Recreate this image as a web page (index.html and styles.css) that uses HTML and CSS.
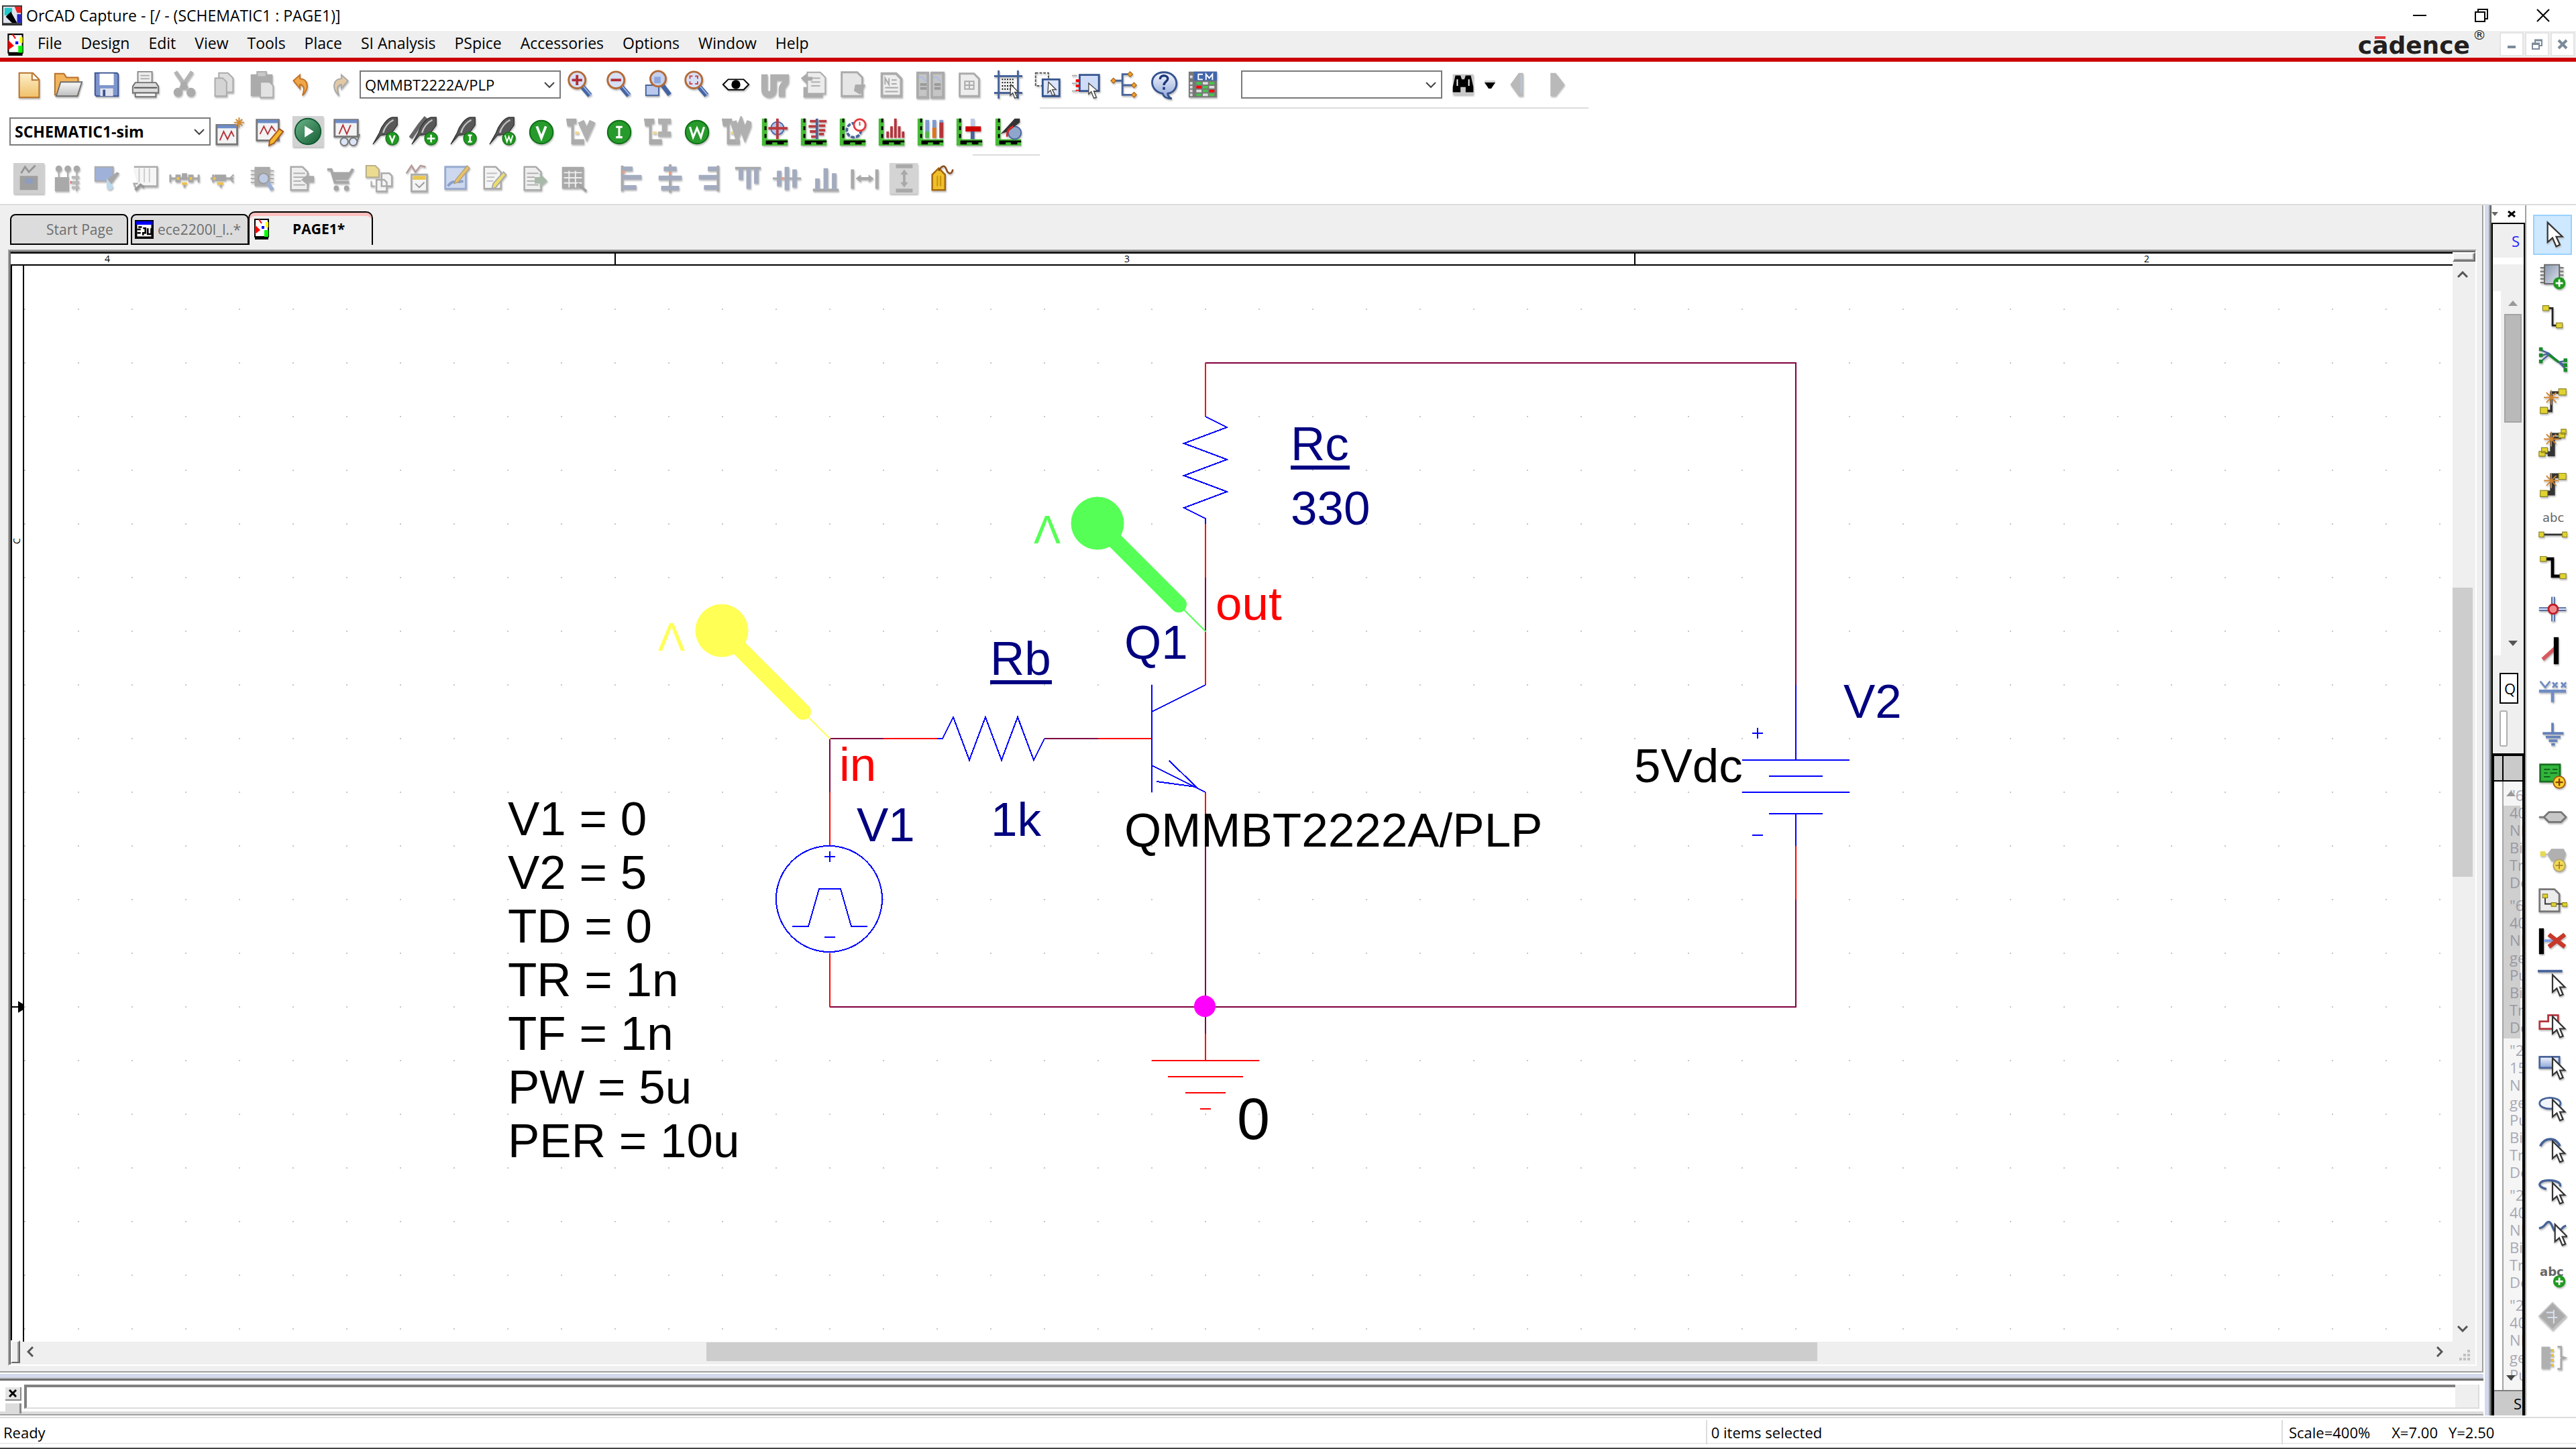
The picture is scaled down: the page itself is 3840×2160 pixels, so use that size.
FILE: index.html
```html
<!DOCTYPE html>
<html lang="en">
<head>
<meta charset="utf-8">
<title>OrCAD Capture - [/ - (SCHEMATIC1 : PAGE1)]</title>
<link rel="stylesheet" href="styles.css">
</head>
<body>
<svg class="sprite" aria-hidden="true">
  <defs>
    <linearGradient id="g-blue" x2="0" y2="1"><stop offset="0" stop-color="#f4f7ff"/><stop offset="1" stop-color="#8ba3d6"/></linearGradient>
    <linearGradient id="g-chip" x2="1" y2="1"><stop offset="0" stop-color="#8795ad"/><stop offset="1" stop-color="#dfe4ee"/></linearGradient>
    <linearGradient id="g-gray" x2="0" y2="1"><stop offset="0" stop-color="#fafafa"/><stop offset="1" stop-color="#bdbdbd"/></linearGradient>
    <linearGradient id="g-tan" x2="0" y2="1"><stop offset="0" stop-color="#fdf0cc"/><stop offset="1" stop-color="#f0c069"/></linearGradient>
    <linearGradient id="g-run" x2="1" y2="1"><stop offset="0" stop-color="#6fb58a"/><stop offset="1" stop-color="#125c33"/></linearGradient>
  </defs>
  <symbol id="i-new" viewBox="0 0 24 24"><path d="M4.500 3h10.500l5 5v14h-15.500z" fill="url(#g-tan)" stroke="#b5702a"/><path d="M14.500 3.500v5h5" fill="#fff" stroke="#b5702a"/></symbol>
  <symbol id="i-open" viewBox="0 0 24 24"><path d="M2 20V3.500h7l2 3h9V20z" fill="#f2b45c" stroke="#b5702a"/><path d="M3 21l3.500-11H23l-3.500 11z" fill="url(#g-gray)" stroke="#6e6e6e"/></symbol>
  <symbol id="i-save" viewBox="0 0 24 24"><path d="M3 3h17l1 1v17H4l-1-1z" fill="#7d95cc" stroke="#3b5490"/><path d="M6.500 3.500h11v9h-11z" fill="#fff"/><path d="M7 15h10v6H7z" fill="#dfe3ee"/><path d="M9 16h2v5H9z" fill="#3b5490"/></symbol>
  <symbol id="i-print" viewBox="0 0 24 24"><path d="M6 2h11v9H6z" fill="#eee" stroke="#8a8a8a"/><path d="M8 5h7M8 7.500h7" stroke="#aaa"/><path d="M4 10.500h16l2 3v5H2v-5z" fill="#dcdcdc" stroke="#707070"/><path d="M3 14.500h18" stroke="#555"/><path d="M4 18.500h16v3H4z" fill="#f4f4f4" stroke="#707070"/></symbol>
  <symbol id="i-cut" viewBox="0 0 24 24"><path d="M5 2l9 13M18 2L9 15" stroke="#b4b4b4" stroke-width="3"/><circle cx="7" cy="18" r="3.500" fill="#ababab"/><circle cx="17" cy="18" r="3.500" fill="#ababab"/><path d="M9 10h5v6H9z" fill="#ababab"/></symbol>
  <symbol id="i-copy" viewBox="0 0 24 24"><path d="M8.500 3h7l4 4v11h-11z" fill="#ddd" stroke="#ababab"/><path d="M5.500 7h6l3 3v11h-9z" fill="#d4d4d4" stroke="#ababab"/></symbol>
  <symbol id="i-paste" viewBox="0 0 24 24"><path d="M3 4h17v17H3z" fill="#ababab"/><path d="M8 2h7v4H8z" fill="#c8c8c8" stroke="#ababab"/><path d="M10.500 10h7l3 3v9h-10z" fill="#e2e2e2" stroke="#ababab"/></symbol>
  <symbol id="i-undo" viewBox="0 0 24 24"><path d="M6 9l5-4.500v3c6 0 8 7 2 13 2-6 1-8-2-8.500V15z" fill="#f0a548" stroke="#c27225"/></symbol>
  <symbol id="i-redo" viewBox="0 0 24 24"><path d="M18 9l-5-4.500v3c-6 0-8 7-2 13-2-6-1-8 2-8.500V15z" fill="#e4c9a5" stroke="#a9a9a9"/></symbol>
  <symbol id="i-lens" viewBox="0 0 24 24"><path d="M13.500 13.500l6 7" stroke="#4464a4" stroke-width="4"/><path d="M14.500 13.500l6 7" stroke="#9db4e3"/><circle cx="9.500" cy="8.500" r="6.500" fill="#d7e0f7" stroke="#b46a35" stroke-width="1.500"/></symbol>
  <symbol id="i-zoomin" viewBox="0 0 24 24"><use href="#i-lens"/><path d="M9.500 4.500v8M5.500 8.500h8" stroke="#b22e34" stroke-width="2"/></symbol>
  <symbol id="i-zoomout" viewBox="0 0 24 24"><use href="#i-lens"/><path d="M5.500 8.500h8" stroke="#b22e34" stroke-width="2"/></symbol>
  <symbol id="i-zoomarea" viewBox="0 0 24 24"><path d="M2.500 12.500h10v8h-10z" fill="#b8c8ee" stroke="#47649a"/><path d="M15 12l6 8" stroke="#4464a4" stroke-width="3.500"/><circle cx="12" cy="7.500" r="6" fill="#c3d0f0" stroke="#b46a35" stroke-width="1.500"/><path d="M9 6h5v5H9z" fill="#8ea6dc"/></symbol>
  <symbol id="i-zoomfit" viewBox="0 0 24 24"><use href="#i-lens"/><path d="M6.500 7.500v-2h2M10.500 5.500h2v2M12.500 9.500v2h-2M8.500 11.500h-2v-2" fill="none" stroke="#c4474b"/></symbol>
  <symbol id="i-eye" viewBox="0 0 24 24"><path d="M2 12l4-4h12l4 4-4 4H6z" fill="#fff" stroke="#000"/><circle cx="12" cy="12" r="3.500"/></symbol>
  <symbol id="i-annot" viewBox="0 0 24 24"><path d="M4 4v12c0 5 7 5 7 0V4M13 6.500h7.500v3c0 2-3 3-3 6v6" fill="none" stroke="#b0b0b0" stroke-width="5"/></symbol>
  <symbol id="i-back" viewBox="0 0 24 24"><path d="M7 2.500h10l4 4V19H7z" fill="#ececec" stroke="#ababab"/><path d="M10 7h7M10 10h7M10 13h7" stroke="#b0b0b0"/><path d="M2 7l5-4v3h4v3H7v3zM4 14h3v5h12v3H4z" fill="#ababab"/></symbol>
  <symbol id="i-drc" viewBox="0 0 24 24"><path d="M3.500 2.500h12l4 4V21h-16z" fill="#e6e6e6" stroke="#ababab" stroke-width="1.500"/><path d="M14 12h8l-4 8-5-3z" fill="#ababab"/></symbol>
  <symbol id="i-net" viewBox="0 0 24 24"><path d="M4.500 3.500h11l4 4V21h-15z" fill="#ededed" stroke="#ababab" stroke-width="2"/><path d="M7 12V7l3 5V7M12 8.500h4M12 11.500h4M7 14.500h10M7 17.500h10" fill="none" stroke="#aaa"/></symbol>
  <symbol id="i-cross" viewBox="0 0 24 24"><path d="M2 3h8v19H2zM13 3h9v19h-9z" fill="#c5c5c5" stroke="#ababab" stroke-width="2"/><path d="M3 7c4-3 4 3 6 2M14 7c4-3 4 3 6 2" fill="none" stroke="#a8bbe6"/><path d="M4 12h5M4 15h5M15 12h5M15 15h5" stroke="#9a9a9a" stroke-width="2"/></symbol>
  <symbol id="i-bom" viewBox="0 0 24 24"><path d="M4.500 3.500h11l4 4V21h-15z" fill="#ededed" stroke="#ababab" stroke-width="1.500"/><path d="M8 9.500h8M8 12.500h8M8 15.500h8M8.500 9v7M12 9v7M15.500 9v7" stroke="#aaa"/></symbol>
  <symbol id="i-grid" viewBox="0 0 24 24"><path d="M1 5.500h22M1 18.500h22M4.500 1v22M19.500 1v22" stroke="#47649a" stroke-width="1.500"/><path d="M7 8h10M7 10.500h10M7 13h10M7 15.500h10" stroke="#000" stroke-dasharray="1 1"/><path d="M14 12l6 6h-3l2 4-2 .5-1.500-4-2 2z" fill="#fff" stroke="#444" stroke-width=".7"/></symbol>
  <symbol id="i-drag" viewBox="0 0 24 24"><path d="M3 3h10v10H3z" fill="none" stroke="#555" stroke-dasharray="2 1"/><path d="M8.500 8h13v13h-13z" fill="#dce5fa" stroke="#35538f" stroke-width="1.500"/><path d="M13 10l6 6h-3l2 4-2 .5-1.500-4-2 2z" fill="#fff" stroke="#444" stroke-width=".7"/></symbol>
  <symbol id="i-itemsel" viewBox="0 0 24 24"><path d="M7 4.500h15V17H7z" fill="#cfdcf7" stroke="#35538f" stroke-width="1.500"/><path d="M1 5h4M1 11h4M1 17h4" stroke="#aaa"/><path d="M4 8h3v2H4zM4 12h3v2H4zM4 16h3v1H4z" fill="#e00"/><path d="M14 11l7 6h-3l2 5-2 .5-2-5-2 2z" fill="#fff" stroke="#444" stroke-width=".7"/></symbol>
  <symbol id="i-tree" viewBox="0 0 24 24"><path d="M3 9h7M10 9V4h6M10 9v11h9M10 12.500h9" fill="none" stroke="#47649a" stroke-width="1.500"/><path d="M3 7l2 2-2 2-2-2zM16 2l2 2-2 2-2-2zM19 10.500l2 2-2 2-2-2zM19 18l2 2-2 2-2-2z" fill="#f2a12e" stroke="#a85f10" stroke-width=".6"/></symbol>
  <symbol id="i-help" viewBox="0 0 24 24"><path d="M12 2.500c12 0 13 15 3 16.500 0 2 1 3 3 4-4 0-6-1-7-4C0 17 0 2.500 12 2.500z" fill="url(#g-blue)" stroke="#35538f" stroke-width="1.500"/><path d="M9 8c0-4 6-3.500 6-.5 0 2-3 2.500-3 5M12 14v2" fill="none" stroke="#1d3878" stroke-width="1.800"/></symbol>
  <symbol id="i-cm" viewBox="0 0 24 24"><path d="M1 2h22v20H1z" fill="#777"/><path d="M5 2h18v7H5z" fill="#4166ac"/><path d="M12 4H8.500v4H12M14.500 8.500V4l2.500 3 2.500-3v4.500" fill="none" stroke="#fff"/><path d="M7 10h4v2H7zM17 10h4v2h-4zM12 13h4v2h-4zM12 16h4v2h-4zM7 19h4v2H7zM17 19h4v2h-4z" fill="#45c34a"/><path d="M7 13h4v2H7zM17 16h4v2h-4z" fill="#f00"/><path d="M12 10h4v2h-4zM17 13h4v2h-4zM7 16h4v2H7zM12 19h4v2h-4zM2 5h2v2H2zM2 10h2v2H2zM2 13h2v2H2zM2 16h2v2H2zM2 19h2v2H2z" fill="#ddd"/></symbol>
  <symbol id="i-find" viewBox="0 0 24 24"><path d="M4 4h16v16H4z" fill="#c9c9c9"/><path d="M6 5h4l1 3h2l1-3h4l2 9v4h-6v-4h-4v4H4v-4z"/><path d="M7.500 8v5M16.500 8v5" stroke="#fff"/></symbol>
  <symbol id="i-left" viewBox="0 0 24 24"><path d="M17 3v18h-3.500L7 12l6.500-9z" fill="#b9b9b9"/><path d="M15.500 4.500v14" stroke="#b8c6e8"/></symbol>
  <symbol id="i-right" viewBox="0 0 24 24"><path d="M8 3v18h4l7-9-7-9z" fill="#b9b9b9"/></symbol>

  <symbol id="i-simnew" viewBox="0 0 24 24"><path d="M1.500 7h16v15h-16z" fill="#f3f3f3" stroke="#777" stroke-width="1.500"/><path d="M2 7h15v2.500H2z" fill="#6d8cc8"/><path d="M4 19l3-7 3 6 3-6 2 4" fill="none" stroke="#b5343b"/><path d="M19 1v8M15 5h8M16.500 2.500l5 5M21.500 2.500l-5 5" stroke="#d18a33"/></symbol>
  <symbol id="i-simedit" viewBox="0 0 24 24"><path d="M2.500 3h17v16h-17z" fill="#f3f3f3" stroke="#777" stroke-width="1.500"/><path d="M3 3h16v2.500H3z" fill="#6d8cc8"/><path d="M5 14l3-6 3 6 3-6 3 4" fill="none" stroke="#b5343b"/><path d="M20 10l3 2-7 9-4 2 .5-4z" fill="#f5b730" stroke="#a6561a"/></symbol>
  <symbol id="i-run" viewBox="0 0 24 24"><path d="M0 0h24v24H0z" fill="#d2d2d2"/><circle cx="12" cy="12" r="10" fill="url(#g-run)" stroke="#0d5a30"/><path d="M9.500 7.500l7 4.500-7 4.500z" fill="#fff"/></symbol>
  <symbol id="i-simview" viewBox="0 0 24 24"><path d="M2.500 3h18v13h-18z" fill="#f3f3f3" stroke="#777" stroke-width="1.500"/><path d="M3 3h17v2.500H3z" fill="#6d8cc8"/><path d="M6 14l3-7 3 7 3-7" fill="none" stroke="#b5343b"/><circle cx="10" cy="20" r="3" fill="#dbe4f8" stroke="#777"/><circle cx="17" cy="20" r="3" fill="#dbe4f8" stroke="#777"/><path d="M20 20l2-6" stroke="#777"/></symbol>
  <symbol id="i-probe" viewBox="0 0 24 24"><path d="M2 22l5-9c2-6 6-11 10-12h4v6l-5 7-8 1z" fill="#585858" stroke="#2c2c2c" stroke-width=".6"/><path d="M18 3c-4 2-7 6-8 10" fill="none" stroke="#c4c4c4" stroke-width="1.300"/><circle cx="17" cy="17.500" r="5" fill="#1f9a1f" stroke="#0f6b12" stroke-width=".6"/></symbol>
  <symbol id="i-pv" viewBox="0 0 24 24"><use href="#i-probe"/><path d="M15 15l2 5 2-5" fill="none" stroke="#fff" stroke-width="1.300"/></symbol>
  <symbol id="i-pd" viewBox="0 0 24 24"><path d="M1 17L8 7l5-6" stroke="#666" stroke-width="3"/><use href="#i-probe"/><path d="M17 14.500v6M14 17.500h6" stroke="#fff" stroke-width="1.300"/></symbol>
  <symbol id="i-pi" viewBox="0 0 24 24"><use href="#i-probe"/><path d="M17 14.500v6M15.500 15h3M15.500 20h3" stroke="#fff" stroke-width="1.300"/></symbol>
  <symbol id="i-pw" viewBox="0 0 24 24"><use href="#i-probe"/><path d="M14 15l1.500 5 1.500-4 1.500 4 1.500-5" fill="none" stroke="#fff"/></symbol>
  <symbol id="i-disc" viewBox="0 0 24 24"><circle cx="12" cy="12.500" r="9" fill="#279a2c" stroke="#0c7014"/></symbol>
  <symbol id="i-bv" viewBox="0 0 24 24"><use href="#i-disc"/><path d="M8.500 8l3.500 9 3.500-9" fill="none" stroke="#fff" stroke-width="2"/></symbol>
  <symbol id="i-bi" viewBox="0 0 24 24"><use href="#i-disc"/><path d="M12 8v9M9.500 8.500h5M9.500 16.500h5" fill="none" stroke="#fff" stroke-width="1.600"/></symbol>
  <symbol id="i-bw" viewBox="0 0 24 24"><use href="#i-disc"/><path d="M6.500 8.500l2.500 8 3-7 3 7 2.500-8" fill="none" stroke="#fff" stroke-width="1.600"/></symbol>
  <symbol id="i-tag" viewBox="0 0 24 24"><path d="M1 2h8v4H7v12h8v4H5V8H2z" fill="#ababab"/><path d="M8 12h3v2H8z" fill="#f1d890"/></symbol>
  <symbol id="i-tv" viewBox="0 0 24 24"><use href="#i-tag"/><path d="M12.500 4l4.500 10 4.500-10" fill="none" stroke="#b0b0b0" stroke-width="5"/></symbol>
  <symbol id="i-ti" viewBox="0 0 24 24"><use href="#i-tag"/><path d="M12 4h10M12 14h10M17 4v10" stroke="#b0b0b0" stroke-width="4"/></symbol>
  <symbol id="i-tw" viewBox="0 0 24 24"><use href="#i-tag"/><path d="M10 4l3 10 3-8 3 8 4-10" fill="none" stroke="#b0b0b0" stroke-width="5"/></symbol>
  <symbol id="i-axis" viewBox="0 0 24 24"><path d="M2 2h4v16h16v5H2z" fill="#46bb35"/><path d="M4 2h1.500v3H4zM4 8h1.500v3H4zM4 14h1.500v3H4zM5 19h17v1.500H5zM5 22h5v-1.500H5zM14 22h5v-1.500h-5z"/></symbol>
  <symbol id="i-a1" viewBox="0 0 24 24"><use href="#i-axis"/><circle cx="14" cy="9.500" r="5" fill="#b5c4e4" stroke="#4a69a8"/><path d="M14 2v16M7 9.500h15" stroke="#b93a3f" stroke-width="2"/></symbol>
  <symbol id="i-a2" viewBox="0 0 24 24"><use href="#i-axis"/><path d="M14.500 2v16" stroke="#47649a" stroke-width="2"/><path d="M9 4h5M8 8h6M9 12h5M10 16h4M16 4h6M16 7.500h5M16 11h5M16 14h4" stroke="#b93a3f" stroke-width="2"/></symbol>
  <symbol id="i-a3" viewBox="0 0 24 24"><use href="#i-axis"/><circle cx="13" cy="11" r="5.500" fill="#fff" stroke="#47649a" stroke-width="2" stroke-dasharray="3 1"/><circle cx="17.500" cy="7" r="4.500" fill="#fff" stroke="#e23a3f" stroke-width="1.500"/><path d="M17.500 4.500v3" stroke="#e23a3f"/></symbol>
  <symbol id="i-a4" viewBox="0 0 24 24"><use href="#i-axis"/><path d="M9 12v5M12 8v9M15 2v15M18 8v9M21 12v5" stroke="#b5343b" stroke-width="2"/></symbol>
  <symbol id="i-a5" viewBox="0 0 24 24"><use href="#i-axis"/><path d="M9.500 3v14M15 3v14M20.500 3v14" stroke="#7e9ad0" stroke-width="3"/><path d="M9.500 12v5" stroke="#50b846" stroke-width="3"/><path d="M15 9v8" stroke="#e0731d" stroke-width="3"/><path d="M20.500 5v12" stroke="#b5343b" stroke-width="3"/></symbol>
  <symbol id="i-a6" viewBox="0 0 24 24"><use href="#i-axis"/><path d="M14.500 2v6" stroke="#b8c6e8" stroke-width="3"/><path d="M14.500 12v6" stroke="#47649a" stroke-width="3"/><path d="M9 8h12v4H9z" fill="#c00"/></symbol>
  <symbol id="i-a7" viewBox="0 0 24 24"><use href="#i-axis"/><circle cx="17" cy="13" r="5" fill="#8ea6cc" stroke="#47649a"/><path d="M6 14L17 2h4v3L12 12z" fill="#333"/><path d="M11 16c0-5 2-7 5-8" fill="none" stroke="#d22" stroke-width="1.500"/></symbol>

  <symbol id="i-b1" viewBox="0 0 24 24"><path d="M0 0h24v24H0z" fill="#cfcfcf"/><path d="M5 10h14v11H5z" fill="#9f9f9f"/><path d="M6 8l3-5 3 4 5-5" fill="none" stroke="#969696" stroke-width="1.500"/><path d="M9 12h6v4H9z" fill="#8d9cc0"/></symbol>
  <symbol id="i-b2" viewBox="0 0 24 24"><circle cx="5" cy="4.500" r="2.500" fill="#a9a9a9"/><circle cx="12" cy="4.500" r="2.500" fill="#a9a9a9"/><circle cx="19" cy="4.500" r="2.500" fill="#a9a9a9"/><path d="M5 5v6M12 5v6M19 5v17" stroke="#a9a9a9"/><path d="M2 11h11v11H2z" fill="#a9a9a9"/><path d="M15 11h6M15 15h6M15 19h6" stroke="#b8b8b8" stroke-width="2"/><path d="M14 14h1v2h-1z" fill="#e66"/></symbol>
  <symbol id="i-b3" viewBox="0 0 24 24"><path d="M3 3h14v11H3z" fill="#9fb1d8" stroke="#ababab"/><path d="M12 13l8-6 2 1-7 9z" fill="#a7a7a7"/><path d="M12 12v7c1 3 5 2 5-1" fill="#bcd9ee"/></symbol>
  <symbol id="i-b4" viewBox="0 0 24 24"><path d="M3 3h18v15H8l-3 3-2-5h3" fill="#f6f6f6" stroke="#ababab" stroke-width="1.300"/><path d="M7 4v11M11 4v11M15 4v11" stroke="#ccc"/><path d="M4 21l4-4 3 2" fill="none" stroke="#999" stroke-width="2"/></symbol>
  <symbol id="i-b5" viewBox="0 0 24 24"><path d="M1 12h22M1 9v6M23 9v6M12 15v4" stroke="#a6a6a6" stroke-width="1.500"/><path d="M5 9h4v6H5zM10 8h4v5h-4zM15 9h4v6h-4z" fill="#a6a6a6"/><path d="M6 11h2v2H6zM16 11h2v2h-2zM10 15h4v2h-4z" fill="#edc251"/></symbol>
  <symbol id="i-b6" viewBox="0 0 24 24"><path d="M2 12h18M4 9v6M10 15v4" stroke="#a6a6a6" stroke-width="1.500"/><path d="M5 9h9v5H5z" fill="#a6a6a6"/><path d="M20 9l-3 3 3 3" fill="none" stroke="#a6a6a6"/><path d="M7 15h5v2H7zM4 11h2v2H4z" fill="#edc251"/></symbol>
  <symbol id="i-b7" viewBox="0 0 24 24"><path d="M6 3h12v15H6z" fill="#ababab"/><path d="M3 6h18M3 9h18M3 12h18M3 15h18" stroke="#ababab"/><circle cx="13" cy="12" r="4" fill="#bfcbe4" stroke="#999"/><path d="M16 15l4 6" stroke="#9db0d6" stroke-width="3"/></symbol>
  <symbol id="i-b8" viewBox="0 0 24 24"><path d="M4 3h9l4 4v14H4z" fill="#eee" stroke="#ababab" stroke-width="1.300"/><path d="M6 8h9M6 11h9M6 14h6M6 17h9" stroke="#aaa"/><path d="M22 10v5h-4v3l-6-5 6-5v2z" fill="#ababab"/></symbol>
  <symbol id="i-b9" viewBox="0 0 24 24"><path d="M2 5h3l3 10h11" fill="none" stroke="#a6a6a6" stroke-width="2"/><path d="M6 7h13l2-3 2 1-5 8H8z" fill="#a6a6a6"/><circle cx="9" cy="19.500" r="2" fill="#a6a6a6"/><circle cx="17" cy="19.500" r="2" fill="#a6a6a6"/></symbol>
  <symbol id="i-b10" viewBox="0 0 24 24"><path d="M2 2h7l3 3v6H2z" fill="#eadb90" stroke="#b5ad88"/><path d="M14 8h6l2 2v8h-8zM10 13h6l2 2v7h-8z" fill="#f4f4f4" stroke="#ababab" stroke-width="1.300"/><path d="M6 14v4h3" fill="none" stroke="#aaa"/></symbol>
  <symbol id="i-b11" viewBox="0 0 24 24"><path d="M3 8l4-6 3 5 4-5 4 1" fill="none" stroke="#b79a9a" stroke-width="1.300"/><path d="M7 9h12v13H7z" fill="#f4f4f4" stroke="#ababab" stroke-width="1.500"/><path d="M8 10h10v3H8z" fill="#e9c64e"/><path d="M10 16l3 3 4-4" fill="none" stroke="#999"/></symbol>
  <symbol id="i-b12" viewBox="0 0 24 24"><path d="M3 3h16v17H3z" fill="#cdd8ef" stroke="#98abd0" stroke-width="1.500"/><path d="M5 18c4-6 8-2 12-4" fill="none" stroke="#8b9fc9" stroke-width="2"/><path d="M20 2l2 2-9 11-3 1 1-3z" fill="#e6c169" stroke="#a99a7a" stroke-width=".6"/></symbol>
  <symbol id="i-b13" viewBox="0 0 24 24"><path d="M3 3h9l4 4v13H3z" fill="#f4f4f4" stroke="#aaa" stroke-width="1.300"/><path d="M5 8h8M5 11h6M5 14h5" stroke="#bbb"/><path d="M18 7l2 2-8 10-3 1 1-4z" fill="#eddf6a" stroke="#aaa"/></symbol>
  <symbol id="i-b14" viewBox="0 0 24 24"><path d="M4 3h9l4 4v14H4z" fill="#eee" stroke="#ababab" stroke-width="1.300"/><path d="M6 8h9M6 11h6M6 14h6M6 17h9" stroke="#aaa"/><path d="M12 11v5h4v3l6-5-6-6v3z" fill="#a9b9a9"/></symbol>
  <symbol id="i-b15" viewBox="0 0 24 24"><path d="M3 3h17v17H3z" fill="#a9a9a9"/><path d="M4.500 7.500h14M4.500 11.500h14M4.500 15.500h14M8.500 6v13M13.500 6v13" stroke="#eee"/><path d="M15 16l7 6" stroke="#a0a0a0" stroke-width="2"/></symbol>
  <symbol id="i-al" viewBox="0 0 24 24"><path d="M5 2v20" stroke="#a9a9a9" stroke-width="2"/><path d="M5 4.500h8M5 11h15M5 19h11" stroke="#a3abbf" stroke-width="3.500"/><path d="M5 6h2v2H5z" fill="#f0a080"/></symbol>
  <symbol id="i-ac" viewBox="0 0 24 24"><path d="M12 1v22" stroke="#a9a9a9" stroke-width="2"/><path d="M7 4.500h10M3 11.500h18M5 19.500h14" stroke="#a3abbf" stroke-width="3.500"/><path d="M11 7h2v2h-2z" fill="#f0a080"/></symbol>
  <symbol id="i-ar" viewBox="0 0 24 24"><path d="M19 2v20" stroke="#a9a9a9" stroke-width="2"/><path d="M11 4.500h8M4 11h15M8 19h11" stroke="#a3abbf" stroke-width="3.500"/></symbol>
  <symbol id="i-at" viewBox="0 0 24 24"><path d="M2 4h20" stroke="#a9a9a9" stroke-width="2"/><path d="M6.500 4v9M12.500 4v16M18.500 4v12" stroke="#a3abbf" stroke-width="3.500"/></symbol>
  <symbol id="i-am" viewBox="0 0 24 24"><path d="M1 12h22" stroke="#a9a9a9" stroke-width="1.500"/><path d="M6 6v12M12 3v18M18 5v14" stroke="#a3abbf" stroke-width="3.500"/><path d="M8 11h2v2H8z" fill="#f0a080"/></symbol>
  <symbol id="i-ab" viewBox="0 0 24 24"><path d="M2 21h20" stroke="#a9a9a9" stroke-width="2"/><path d="M5.500 12v9M12 4v17M18.500 8v13" stroke="#a3abbf" stroke-width="3.500"/></symbol>
  <symbol id="i-dh" viewBox="0 0 24 24"><path d="M2.500 5v15M21.500 5v15" stroke="#a9a9a9" stroke-width="2.500"/><path d="M5 12l4-3v2h6V9l4 3-4 3v-2H9v2z" fill="#a9a9a9"/></symbol>
  <symbol id="i-dv" viewBox="0 0 24 24"><path d="M1 0h22v24H1z" fill="#d4d4d4"/><path d="M6 1h13v3H6zM6 20h13v3H6z" fill="#a9a9a9"/><path d="M12.500 5l3 4h-2v6h2l-3 4-3-4h2V9h-2z" fill="#a9a9a9"/></symbol>
  <symbol id="i-label" viewBox="0 0 24 24"><path d="M4 9l5-5 5 5v12H4z" fill="#eec02a" stroke="#a5680e" stroke-width="1.300"/><path d="M8 10v8M10.500 10v8" stroke="#c8900a"/><path d="M9 6c3-5 5-4 6-1s4 5 5 0" fill="none" stroke="#8a4a16" stroke-width="1.300"/></symbol>

  <symbol id="i-ptr" viewBox="0 0 24 24"><path d="M8 2v16l4-3.500 3 7 3-1.500-3-6.500h5z" fill="#fff" stroke="#333" stroke-width="1.200"/></symbol>
  <symbol id="i-part" viewBox="0 0 24 24"><path d="M2 5h19M2 8h19M2 11h19M2 14h19M2 17h19" stroke="#777" stroke-width="1.300"/><path d="M5.500 2.500h12v15.500h-12z" fill="url(#g-chip)" stroke="#666"/><circle cx="17.500" cy="17.500" r="5" fill="#1f9a1f"/><path d="M17.500 14.500v6M14.500 17.500h6" stroke="#fff" stroke-width="1.500"/></symbol>
  <symbol id="i-wire" viewBox="0 0 24 24"><path d="M6 4h6v14h6" fill="none" stroke="#222" stroke-width="1.500"/><path d="M4 2h5v4H4zM15 16h5v4h-5z" fill="#e2d231" stroke="#8b8420" stroke-width=".6"/></symbol>
  <symbol id="i-netg" viewBox="0 0 24 24"><path d="M2 4l7 3 8 7 6 3M2 9l7-2M2 14l7-6M17 14l6 6M17 14l6-1" fill="none" stroke="#47649a" stroke-width="1.300"/><path d="M9 8l8 6" stroke="#188a2a" stroke-width="2"/><path d="M1 2h3v3H1zM1 7h3v3H1zM1 12h3v3H1zM21 11h3v3h-3zM21 15h3v3h-3zM21 19h3v3h-3z" fill="#188a2a"/></symbol>
  <symbol id="i-spark" viewBox="0 0 24 24"><path d="M11 3v12M5 9h12M7 5l8 8M15 5l-8 8" stroke="#d1842f"/></symbol>
  <symbol id="i-auto1" viewBox="0 0 24 24"><path d="M5 20h6V5h9" fill="none" stroke="#333" stroke-width="2"/><use href="#i-spark"/><path d="M17 2h6v5h-6zM2 17h6v5H2z" fill="#e2d231" stroke="#8b8420" stroke-width=".6"/></symbol>
  <symbol id="i-auto2" viewBox="0 0 24 24"><path d="M5 20h6V5h9M8 22h5V8h6" fill="none" stroke="#333" stroke-width="2"/><use href="#i-spark"/><path d="M17 4h5v4h-5zM19 1h4v4h-4zM1 19h5v4H1zM3 16h5v4H3z" fill="#e2d231" stroke="#8b8420" stroke-width=".6"/></symbol>
  <symbol id="i-auto3" viewBox="0 0 24 24"><path d="M5 19h7V5h8" fill="none" stroke="#333" stroke-width="4"/><use href="#i-spark"/><path d="M17 3h6v5h-6zM2 17h6v5H2z" fill="#e2d231" stroke="#8b8420" stroke-width=".6"/></symbol>
  <symbol id="i-line" viewBox="0 0 24 24"><path d="M3 19h19" stroke="#333" stroke-width="1.500"/><path d="M1 17h4v4H1zM20 17h4v4h-4z" fill="#e2d231" stroke="#8b8420" stroke-width=".6"/></symbol>
  <symbol id="i-bus" viewBox="0 0 24 24"><path d="M5 5h7v14h8" fill="none" stroke="#000" stroke-width="2.600"/><path d="M2 3h5v4H2zM18 17h5v4h-5z" fill="#e2d231" stroke="#8b8420" stroke-width=".6"/></symbol>
  <symbol id="i-junc" viewBox="0 0 24 24"><path d="M1 12h22M12.500 2v20" stroke="#47649a" stroke-width="3"/><path d="M1 12h22M12.500 2v20" stroke="#dfe8fb"/><circle cx="12.500" cy="12" r="3.800" fill="#f08a8e" stroke="#c01c24" stroke-width="1.500"/></symbol>
  <symbol id="i-entry" viewBox="0 0 24 24"><path d="M4 19L14 10" stroke="#d65a5f" stroke-width="3"/><path d="M13 1h4v22h-4z"/></symbol>
  <symbol id="i-pwr" viewBox="0 0 24 24"><path d="M2 3l4 5 4-5M12 4l4 4M16 4l-4 4M19 4l4 4M23 4l-4 4" fill="none" stroke="#6f8cc4" stroke-width="1.500"/><path d="M1 11h22M12 11v9" stroke="#6f8cc4" stroke-width="2.500"/></symbol>
  <symbol id="i-gnd" viewBox="0 0 24 24"><path d="M12 3v9M4 11.500h17M6.500 14.500h12M9 17.500h7M11 20.500h3" stroke="#6581ba" stroke-width="2"/></symbol>
  <symbol id="i-hier" viewBox="0 0 24 24"><path d="M2 3h16v14H2z" fill="#31b53c" stroke="#186f20" stroke-width="1.500"/><path d="M5 7h5M12 7h4M5 10h3M10 10h6M5 13h5" stroke="#0d5a15"/><circle cx="17.500" cy="17.500" r="4.800" fill="#f8d42e" stroke="#a5560e"/><path d="M17.500 14.500v6M14.500 17.500h6" stroke="#8a3d08" stroke-width="1.300"/></symbol>
  <symbol id="i-port" viewBox="0 0 24 24"><path d="M1 12h4l4-4h10l4 4-4 4H9l-4-4" fill="#c8c8c8" stroke="#777" stroke-width="1.500"/></symbol>
  <symbol id="i-pin" viewBox="0 0 24 24"><path d="M3 8h5l3-4h10l2 4-2 6H11L8 9" fill="#b0b0b0"/><path d="M2 6h4v4H2z" fill="#e8da52"/><circle cx="17.500" cy="17.500" r="4.800" fill="#f3d852" stroke="#b3a66a"/><path d="M17.500 14.500v6M14.500 17.500h6" stroke="#a08430"/></symbol>
  <symbol id="i-off" viewBox="0 0 24 24"><path d="M1.500 3h12l4 4v14h-16z" fill="#ececec" stroke="#777" stroke-width="1.500"/><path d="M6 8v7h17" fill="none" stroke="#333"/><path d="M4 7h4v3H4zM11 14h4v3h-4zM20 14h4v3h-4z" fill="#e2d231" stroke="#8b8420" stroke-width=".6"/></symbol>
  <symbol id="i-noc" viewBox="0 0 24 24"><path d="M1 1h4v21H1z"/><path d="M5 11h8" stroke="#7fa0e6" stroke-width="2"/><path d="M9 6l13 10M22 6L9 16" stroke="#c8382a" stroke-width="3.500"/></symbol>
  <symbol id="i-cur" viewBox="0 0 24 24"><path d="M12 5v14l3.500-3 2.500 6 2.500-1-2.500-6h4z" fill="#fff" stroke="#333" stroke-width="1.200"/></symbol>
  <symbol id="i-s1" viewBox="0 0 24 24"><path d="M0 2h20" stroke="#47649a" stroke-width="2"/><use href="#i-cur"/></symbol>
  <symbol id="i-s2" viewBox="0 0 24 24"><path d="M1.500 15V9h7V4h8v11z" fill="#fff" stroke="#b5343b" stroke-width="1.500"/><use href="#i-cur"/></symbol>
  <symbol id="i-s3" viewBox="0 0 24 24"><path d="M1.500 4h16v9h-16z" fill="url(#g-blue)" stroke="#47649a" stroke-width="1.500"/><use href="#i-cur"/></symbol>
  <symbol id="i-s4" viewBox="0 0 24 24"><ellipse cx="10" cy="8" rx="8.500" ry="4.500" fill="#f2f5fd" stroke="#47649a" stroke-width="1.500"/><use href="#i-cur"/></symbol>
  <symbol id="i-s5" viewBox="0 0 24 24"><path d="M2 9c4-8 13-7 16 0" fill="none" stroke="#47649a" stroke-width="2"/><use href="#i-cur"/></symbol>
  <symbol id="i-s6" viewBox="0 0 24 24"><path d="M7 10C-2 8 1 3 9 3s10 3 9 5" fill="none" stroke="#47649a" stroke-width="1.800"/><use href="#i-cur"/></symbol>
  <symbol id="i-s7" viewBox="0 0 24 24"><path d="M1 8c5 0 5-5 8-5s3 9 7 8 3-4 7-5" fill="none" stroke="#47649a" stroke-width="1.800"/><use href="#i-cur" x="2"/></symbol>
  <symbol id="i-plus" viewBox="0 0 24 24"><circle cx="17.500" cy="17.500" r="5" fill="#1f9a1f"/><path d="M17.500 14.500v6M14.500 17.500h6" stroke="#fff" stroke-width="1.500"/></symbol>
  <symbol id="i-ieee" viewBox="0 0 24 24"><path d="M12 1l11 11-11 11L1 12z" fill="#ababab" stroke="#c3c3c3"/><path d="M8 13h8M13 7v11M7 9h6" stroke="#dbe3f6"/></symbol>
  <symbol id="i-pins" viewBox="0 0 24 24"><path d="M3 3h7v18H3z" fill="#b0b0b0"/><path d="M10 6h3M10 10h3M10 14h3M10 18h3" stroke="#aaa" stroke-width="2"/><path d="M11 5h2v2h-2zM11 9h2v2h-2zM11 13h2v2h-2zM11 17h2v2h-2z" fill="#e8c63a"/><path d="M16 3h3v8l3 1-3 1v8h-3" fill="none" stroke="#aaa" stroke-width="1.500"/></symbol>
  <symbol id="i-page" viewBox="0 0 12 16"><path d="M1 1h10v13H1z" fill="#fff" stroke="#000"/><path d="M1 5l4 4-4 3z" fill="#f00"/><path d="M9 3h2v4H9z" fill="#ff0"/><path d="M8 9h3v5H8z" fill="#0f0"/><path d="M6 6h2v2H6z" fill="#00f"/><path d="M4 1l2 3" stroke="#f00"/><path d="M1 15h10" stroke="#000" stroke-width="2"/></symbol>
</svg>

<div class="app">
  <header class="titlebar">
    <svg class="appicon" viewBox="0 0 16 16"><path d="M0 0h16v16H0z" fill="#333"/><path d="M1 1h14v13H1z" fill="#dfe3ee"/><path d="M2 2h6v6H2z" fill="#1ec8c8"/><path d="M10 1h5v5h-3z" fill="#e22"/><path d="M12 7h3v7h-3z" fill="#22c"/><path d="M3 9l4-4 5 9H8z"/></svg>
    <h1 class="title">OrCAD Capture - [/ - (SCHEMATIC1 : PAGE1)]</h1>
    <div class="winbtns">
      <button aria-label="Minimize"><svg viewBox="0 0 20 20"><path d="M0 10h20" stroke="#000" stroke-width="2"/></svg></button>
      <button aria-label="Restore"><svg viewBox="0 0 20 20"><path d="M1 5h14v14H1zM5 5V1h14v14h-4" fill="none" stroke="#000" stroke-width="2"/></svg></button>
      <button aria-label="Close"><svg viewBox="0 0 20 20"><path d="M1 1l18 18M19 1L1 19" stroke="#000" stroke-width="2"/></svg></button>
    </div>
  </header>

  <nav class="menubar">
    <svg class="pageicon"><use href="#i-page"/></svg>
    <button>File</button><button>Design</button><button>Edit</button><button>View</button><button>Tools</button><button>Place</button><button>SI Analysis</button><button>PSpice</button><button>Accessories</button><button>Options</button><button>Window</button><button>Help</button>
    <div class="brand">c<span class="macron">a</span>dence<sup>®</sup></div>
    <div class="mdibtns">
      <button aria-label="Minimize page"><svg viewBox="0 0 16 16"><path d="M2 12h12" stroke="#7b8a99" stroke-width="4"/></svg></button>
      <button aria-label="Restore page"><svg viewBox="0 0 16 16"><path d="M1 8h10v7H1zM5 7V2h10v8h-3" fill="none" stroke="#7b8a99" stroke-width="2"/><path d="M0 7h12M4 2h12" stroke="#7b8a99" stroke-width="3"/></svg></button>
      <button aria-label="Close page"><svg viewBox="0 0 16 16"><path d="M2 2l12 12M14 2L2 14" stroke="#7b8a99" stroke-width="4"/></svg></button>
    </div>
  </nav>

  <section class="toolbars">
    <div class="bar">
      <button class="tool" aria-label="New"><svg><use href="#i-new"/></svg></button>
      <button class="tool" aria-label="Open"><svg><use href="#i-open"/></svg></button>
      <button class="tool" aria-label="Save"><svg><use href="#i-save"/></svg></button>
      <button class="tool" aria-label="Print"><svg><use href="#i-print"/></svg></button>
      <button class="tool" aria-label="Cut"><svg><use href="#i-cut"/></svg></button>
      <button class="tool" aria-label="Copy"><svg><use href="#i-copy"/></svg></button>
      <button class="tool" aria-label="Paste"><svg><use href="#i-paste"/></svg></button>
      <button class="tool" aria-label="Undo"><svg><use href="#i-undo"/></svg></button>
      <button class="tool" aria-label="Redo"><svg><use href="#i-redo"/></svg></button>
      <div class="combo"><select aria-label="Most recent part"><option>QMMBT2222A/PLP</option></select><svg viewBox="0 0 16 10"><path d="M1 1l7 7 7-7" fill="none" stroke="#444" stroke-width="2"/></svg></div>
      <button class="tool" aria-label="Zoom in"><svg><use href="#i-zoomin"/></svg></button>
      <button class="tool" aria-label="Zoom out"><svg><use href="#i-zoomout"/></svg></button>
      <button class="tool" aria-label="Zoom area"><svg><use href="#i-zoomarea"/></svg></button>
      <button class="tool" aria-label="Zoom all"><svg><use href="#i-zoomfit"/></svg></button>
      <button class="tool" aria-label="Fisheye"><svg><use href="#i-eye"/></svg></button>
      <button class="tool" aria-label="Annotate"><svg><use href="#i-annot"/></svg></button>
      <button class="tool" aria-label="Back annotate"><svg><use href="#i-back"/></svg></button>
      <button class="tool" aria-label="Design rules check"><svg><use href="#i-drc"/></svg></button>
      <button class="tool" aria-label="Create netlist"><svg><use href="#i-net"/></svg></button>
      <button class="tool" aria-label="Cross reference"><svg><use href="#i-cross"/></svg></button>
      <button class="tool" aria-label="Bill of materials"><svg><use href="#i-bom"/></svg></button>
      <button class="tool" aria-label="Snap to grid"><svg><use href="#i-grid"/></svg></button>
      <button class="tool" aria-label="Drag connected"><svg><use href="#i-drag"/></svg></button>
      <button class="tool" aria-label="Area select"><svg><use href="#i-itemsel"/></svg></button>
      <button class="tool" aria-label="Project manager"><svg><use href="#i-tree"/></svg></button>
      <button class="tool" aria-label="Help topics"><svg><use href="#i-help"/></svg></button>
      <button class="tool" aria-label="Constraint manager"><svg><use href="#i-cm"/></svg></button>
      <div class="combo find"><select aria-label="Find"><option></option></select><svg viewBox="0 0 16 10"><path d="M1 1l7 7 7-7" fill="none" stroke="#444" stroke-width="2"/></svg></div>
      <button class="tool" aria-label="Search"><svg><use href="#i-find"/></svg></button>
      <button class="tool slim" aria-label="Search options"><svg viewBox="0 0 16 12"><path d="M0 0h16v5H0z" fill="#d6d6d6"/><path d="M0 3h16l-6 9H6z"/></svg></button>
      <button class="tool" aria-label="Previous"><svg><use href="#i-left"/></svg></button>
      <button class="tool" aria-label="Next"><svg><use href="#i-right"/></svg></button>
    </div>
    <div class="edge edge-top"></div>
    <div class="bar">
      <div class="combo strong"><select aria-label="Simulation profile"><option>SCHEMATIC1-sim</option></select><svg viewBox="0 0 16 10"><path d="M1 1l7 7 7-7" fill="none" stroke="#444" stroke-width="2"/></svg></div>
      <button class="tool" aria-label="New simulation profile"><svg><use href="#i-simnew"/></svg></button>
      <button class="tool" aria-label="Edit simulation profile"><svg><use href="#i-simedit"/></svg></button>
      <button class="tool" aria-label="Run PSpice"><svg><use href="#i-run"/></svg></button>
      <button class="tool" aria-label="View results"><svg><use href="#i-simview"/></svg></button>
      <button class="tool" aria-label="Voltage marker"><svg><use href="#i-pv"/></svg></button>
      <button class="tool" aria-label="Differential marker"><svg><use href="#i-pd"/></svg></button>
      <button class="tool" aria-label="Current marker"><svg><use href="#i-pi"/></svg></button>
      <button class="tool" aria-label="Power marker"><svg><use href="#i-pw"/></svg></button>
      <button class="tool" aria-label="Bias voltage"><svg><use href="#i-bv"/></svg></button>
      <button class="tool" aria-label="Toggle voltage"><svg><use href="#i-tv"/></svg></button>
      <button class="tool" aria-label="Bias current"><svg><use href="#i-bi"/></svg></button>
      <button class="tool" aria-label="Toggle current"><svg><use href="#i-ti"/></svg></button>
      <button class="tool" aria-label="Bias power"><svg><use href="#i-bw"/></svg></button>
      <button class="tool" aria-label="Toggle power"><svg><use href="#i-tw"/></svg></button>
      <button class="tool" aria-label="Advanced analysis"><svg><use href="#i-a1"/></svg></button>
      <button class="tool" aria-label="Sensitivity"><svg><use href="#i-a2"/></svg></button>
      <button class="tool" aria-label="Optimizer"><svg><use href="#i-a3"/></svg></button>
      <button class="tool" aria-label="Monte Carlo"><svg><use href="#i-a4"/></svg></button>
      <button class="tool" aria-label="Smoke"><svg><use href="#i-a5"/></svg></button>
      <button class="tool" aria-label="Parametric plotter"><svg><use href="#i-a6"/></svg></button>
      <button class="tool" aria-label="Import optimizer"><svg><use href="#i-a7"/></svg></button>
    </div>
    <div class="edge edge-mid"></div>
    <div class="bar">
      <button class="tool" aria-label="Simulate"><svg><use href="#i-b1"/></svg></button>
      <button class="tool" aria-label="Topology"><svg><use href="#i-b2"/></svg></button>
      <button class="tool" aria-label="Explore"><svg><use href="#i-b3"/></svg></button>
      <button class="tool" aria-label="Models"><svg><use href="#i-b4"/></svg></button>
      <button class="tool" aria-label="Extract net"><svg><use href="#i-b5"/></svg></button>
      <button class="tool" aria-label="Extract pin"><svg><use href="#i-b6"/></svg></button>
      <button class="tool" aria-label="Find part"><svg><use href="#i-b7"/></svg></button>
      <button class="tool" aria-label="Import"><svg><use href="#i-b8"/></svg></button>
      <button class="tool" aria-label="Order"><svg><use href="#i-b9"/></svg></button>
      <button class="tool" aria-label="Copy design"><svg><use href="#i-b10"/></svg></button>
      <button class="tool" aria-label="Waveform check"><svg><use href="#i-b11"/></svg></button>
      <button class="tool" aria-label="Edit drawing"><svg><use href="#i-b12"/></svg></button>
      <button class="tool" aria-label="Edit page"><svg><use href="#i-b13"/></svg></button>
      <button class="tool" aria-label="Export"><svg><use href="#i-b14"/></svg></button>
      <button class="tool" aria-label="Table"><svg><use href="#i-b15"/></svg></button>
      <button class="tool group" aria-label="Align left"><svg><use href="#i-al"/></svg></button>
      <button class="tool" aria-label="Align center"><svg><use href="#i-ac"/></svg></button>
      <button class="tool" aria-label="Align right"><svg><use href="#i-ar"/></svg></button>
      <button class="tool" aria-label="Align top"><svg><use href="#i-at"/></svg></button>
      <button class="tool" aria-label="Align middle"><svg><use href="#i-am"/></svg></button>
      <button class="tool" aria-label="Align bottom"><svg><use href="#i-ab"/></svg></button>
      <button class="tool" aria-label="Distribute horizontally"><svg><use href="#i-dh"/></svg></button>
      <button class="tool" aria-label="Distribute vertically"><svg><use href="#i-dv"/></svg></button>
      <button class="tool" aria-label="Label"><svg><use href="#i-label"/></svg></button>
    </div>
  </section>

  <main class="main">
    <div class="left">
      <section class="work">
        <div class="tabs">
          <button class="tab">Start Page</button>
          <button class="tab file"><svg viewBox="0 0 16 16"><path d="M1 1h14v14H1z" fill="#fff" stroke="#000" stroke-width="2"/><path d="M1 1h14v3H1z" fill="#00f"/><path d="M2 8h3M2 11h3M7 7h2v4H7v2M11 7v5h3V7M3 6h3" fill="none" stroke="#000" stroke-width="1.500"/></svg>ece2200l_l..*</button>
          <button class="tab active"><svg><use href="#i-page"/></svg><span>PAGE1*</span></button>
        </div>
        <div class="doc">
          <svg class="hruler" viewBox="16 0 3640 16" preserveAspectRatio="xMinYMin slice">
            <path d="M917 0v16M2437 0v16" stroke="#000" stroke-width="2"/>
            <text x="156" y="13">4</text><text x="1676" y="13">3</text><text x="3196" y="13">2</text>
          </svg>
          <div class="splitbox"></div>
          <svg class="vruler" viewBox="0 396 16 1604" preserveAspectRatio="xMinYMin slice">
            <text x="-811" y="12" transform="rotate(-90)">C</text>
            <path d="M0 1501h10v-7l8 5v4l-8 5v-7" stroke="#000" stroke-width="2"/>
          </svg>
          <svg class="canvas" viewBox="36 396 3620 1604" preserveAspectRatio="xMinYMin slice">
            <defs><pattern id="dots" width="80" height="80" x="36" y="60" patternUnits="userSpaceOnUse"><rect width="2" height="2" fill="#c6c6c6"/></pattern></defs>
            <rect x="36" y="396" width="3620" height="1604" fill="url(#dots)"/>
            <g class="wires">
              <path d="M1797 541H2677V1021M1797 861V941M1797 1261V1501M1237 1181V1101H1317M1557 1101H1637M1237 1501H2677V1341M1797 1501V1541"/>
            </g>
            <g class="pins">
              <path d="M1797 541V621M1797 780V861M1797 941V1021M1797 1181V1261M1317 1101H1397M1637 1101H1717M1237 1181V1261M1237 1421V1501M2677 1261V1341M1797 1541V1581M1717 1581H1877M1741 1605H1853M1767 1629H1827M1789 1653H1805"/>
            </g>
            <g class="parts">
              <path d="M1797 621L1829 637 1765 661 1829 685 1765 709 1829 733 1765 757 1797 773V781"/>
              <path d="M1397 1101H1405L1421 1069 1445 1133 1469 1069 1493 1133 1517 1069 1541 1133 1557 1101"/>
              <path d="M1717 1021V1181M1797 1021L1717 1061M1717 1141L1797 1181M1743 1134L1783 1173 1724 1165"/>
              <path d="M2677 1021V1133M2597 1133H2757M2637 1157H2717M2597 1181H2757M2637 1213H2717M2677 1213V1261M2612 1093H2628M2620 1085V1101M2612 1245H2628"/>
              <circle cx="1236" cy="1340" r="79"/>
              <path d="M1229 1277H1245M1237 1269V1285M1229 1397H1245M1181 1381H1205L1221 1325H1253L1269 1381H1293"/>
            </g>
            <circle cx="1796" cy="1500" r="16" fill="#f0f"/>
            <g fill="#5f5" stroke="#5f5" stroke-linecap="round">
              <circle cx="1636" cy="780" r="39"/><path d="M1637 781L1757 901" stroke-width="24"/><path d="M1757 901L1797 941" stroke-width="2"/>
            </g>
            <g fill="#ff5" stroke="#ff5" stroke-linecap="round">
              <circle cx="1076" cy="940" r="39"/><path d="M1077 941L1197 1061" stroke-width="24"/><path d="M1197 1061L1237 1101" stroke-width="2"/>
            </g>
            <g class="labels">
              <text x="1541" y="810" fill="#5f5" class="flag">Λ</text>
              <text x="981" y="970" fill="#ff5" class="flag">Λ</text>
              <g fill="#000">
                <text x="757" y="1245">V1 = 0</text><text x="757" y="1325">V2 = 5</text><text x="757" y="1405">TD = 0</text><text x="757" y="1485">TR = 1n</text><text x="757" y="1565">TF = 1n</text><text x="757" y="1645">PW = 5u</text><text x="757" y="1725">PER = 10u</text>
                <text x="1676" y="1262">QMMBT2222A/PLP</text><text x="2436" y="1166">5Vdc</text><text x="1844" y="1698" class="net0">0</text>
              </g>
              <g fill="#000080">
                <text x="1476" y="1006">Rb</text><path d="M1476 1014h92v6h-92zM1924 694h88v6h-88z"/>
                <text x="1477" y="1246">1k</text><text x="1277" y="1254">V1</text><text x="1924" y="686">Rc</text><text x="1924" y="782">330</text><text x="1676" y="982">Q1</text><text x="2748" y="1070">V2</text>
              </g>
              <g fill="#f00"><text x="1251" y="1164">in</text><text x="1812" y="924">out</text></g>
            </g>
          </svg>
          <div class="vscroll"><svg viewBox="0 0 16 10"><path d="M1 9l7-7 7 7" fill="none" stroke="#555" stroke-width="3"/></svg><i class="before"></i><i class="thumb"></i><i class="after"></i><svg viewBox="0 0 16 10"><path d="M1 1l7 7 7-7" fill="none" stroke="#555" stroke-width="3"/></svg></div>
          <div class="hscroll"><b class="grip"></b><svg viewBox="0 0 10 16"><path d="M9 1L2 8l7 7" fill="none" stroke="#555" stroke-width="3"/></svg><i class="before"></i><i class="thumb"></i><i class="after"></i><svg viewBox="0 0 10 16"><path d="M1 1l7 7-7 7" fill="none" stroke="#555" stroke-width="3"/></svg></div>
          <svg class="sizer" viewBox="0 0 16 16"><path d="M12 0h4v4h-4zM12 6h4v4h-4zM6 6h4v4H6zM12 12h4v4h-4zM6 12h4v4H6zM0 12h4v4H0z" fill="#c0c0c0"/></svg>
        </div>
      </section>
      <div class="hsplit"></div>
      <section class="command">
        <div class="side"><button aria-label="Close command window"><svg viewBox="0 0 12 12"><path d="M1 1l10 10M11 1L1 11" stroke="#000" stroke-width="3"/></svg></button><i></i></div>
        <input type="text" aria-label="Command">
        <div class="cap"></div>
      </section>
    </div>
    <div class="vsplit"></div>

    <aside class="palette">
      <div class="phead"><svg viewBox="0 0 10 6"><path d="M0 0h10L5 6z" fill="#666"/></svg><button aria-label="Close panel"><svg viewBox="0 0 12 10"><path d="M1 1l10 8M11 1L1 9" stroke="#000" stroke-width="3"/></svg></button></div>
      <div class="pbox">
        <a class="plink" href="#">S</a>
        <div class="pstrip"></div>
        <div class="ptools"></div>
        <div class="plist"><svg viewBox="0 0 14 8"><path d="M0 8l7-8 7 8z" fill="#999"/></svg><i></i><svg class="down" viewBox="0 0 14 8"><path d="M0 0l7 8 7-8z" fill="#555"/></svg></div>
        <div class="pform"><span class="pq">Q</span><span class="pbar"></span></div>
      </div>
      <div class="phits">
        <div class="prow"><i></i><i></i></div>
        <div class="ptable">
          <div class="pcol">
            <p>"6<br>40<br>NI<br>Bi<br>Tr<br>De</p>
            <p>"6<br>40<br>NI<br>ge<br>Pu<br>Bi<br>Tr<br>De</p>
            <p>"2<br>15<br>NI<br>ge<br>Pu<br>Bi<br>Tr<br>De</p>
            <p>"2<br>40<br>NI<br>Bi<br>Tr<br>De</p>
            <p>"2<br>40<br>NI<br>ge<br>Pu</p>
          </div>
          <i class="pthumb"></i>
          <svg class="pup" viewBox="0 0 14 8"><path d="M0 8l7-8 7 8z" fill="#999"/></svg>
          <svg class="pdown" viewBox="0 0 14 8"><path d="M0 0l7 8 7-8z" fill="#444"/></svg>
        </div>
        <div class="pfoot">S</div>
      </div>
    </aside>

    <aside class="rail">
      <button class="on" aria-label="Select"><svg><use href="#i-ptr"/></svg></button>
      <button aria-label="Place part"><svg><use href="#i-part"/></svg></button>
      <button aria-label="Place wire"><svg><use href="#i-wire"/></svg></button>
      <button aria-label="Place net group"><svg><use href="#i-netg"/></svg></button>
      <button aria-label="Auto connect two points"><svg><use href="#i-auto1"/></svg></button>
      <button aria-label="Auto connect multi points"><svg><use href="#i-auto2"/></svg></button>
      <button aria-label="Auto connect to bus"><svg><use href="#i-auto3"/></svg></button>
      <button class="abc" aria-label="Place net alias"><span>abc</span><svg><use href="#i-line"/></svg></button>
      <button aria-label="Place bus"><svg><use href="#i-bus"/></svg></button>
      <button aria-label="Place junction"><svg><use href="#i-junc"/></svg></button>
      <button aria-label="Place bus entry"><svg><use href="#i-entry"/></svg></button>
      <button aria-label="Place power"><svg><use href="#i-pwr"/></svg></button>
      <button aria-label="Place ground"><svg><use href="#i-gnd"/></svg></button>
      <button aria-label="Place hierarchical block"><svg><use href="#i-hier"/></svg></button>
      <button aria-label="Place port"><svg><use href="#i-port"/></svg></button>
      <button aria-label="Place pin"><svg><use href="#i-pin"/></svg></button>
      <button aria-label="Place off-page connector"><svg><use href="#i-off"/></svg></button>
      <button aria-label="Place no connect"><svg><use href="#i-noc"/></svg></button>
      <button aria-label="Place line"><svg><use href="#i-s1"/></svg></button>
      <button aria-label="Place polyline"><svg><use href="#i-s2"/></svg></button>
      <button aria-label="Place rectangle"><svg><use href="#i-s3"/></svg></button>
      <button aria-label="Place ellipse"><svg><use href="#i-s4"/></svg></button>
      <button aria-label="Place arc"><svg><use href="#i-s5"/></svg></button>
      <button aria-label="Place elliptical arc"><svg><use href="#i-s6"/></svg></button>
      <button aria-label="Place bezier curve"><svg><use href="#i-s7"/></svg></button>
      <button class="abc bold" aria-label="Place text"><span>abc</span><svg><use href="#i-plus"/></svg></button>
      <button aria-label="Place IEEE symbol"><svg><use href="#i-ieee"/></svg></button>
      <button aria-label="Place pin array"><svg><use href="#i-pins"/></svg></button>
    </aside>
  </main>

  <footer class="status">
    <span class="msg">Ready</span>
    <span class="sel">0 items selected</span>
    <span class="pos"><span>Scale=400%</span><span class="xy"><span>X=7.00</span><span>Y=2.50</span></span></span>
  </footer>
</div>
</body>
</html>
```
FILE: styles.css
```css
* { box-sizing: border-box; }
body { margin: 0; background: #fff; color: #000; font-family: "Open Sans", "Noto Sans", sans-serif; font-size: 22px; }
button, select, input { font: inherit; color: inherit; margin: 0; padding: 0; border: 0; background: none; }
svg { display: block; flex: none; }
.sprite { position: absolute; width: 0; height: 0; }
.app { display: flex; flex-direction: column; height: 100vh; overflow: hidden; }

/* title bar */
.titlebar { display: flex; align-items: center; height: 46px; padding: 0 3px 0 2px; }
.appicon { width: 32px; height: 30px; }
.title { margin: 0 auto 0 5px; font-size: 23px; font-weight: 400; line-height: 44px; }
.winbtns { display: flex; }
.winbtns button { display: flex; justify-content: center; align-items: center; width: 92px; height: 44px; }
.winbtns svg { width: 20px; height: 20px; }

/* menu bar */
.menubar { display: flex; align-items: center; height: 46px; padding-left: 10px; background: #efefef; border-bottom: 6px solid #c00; }
.pageicon { width: 26px; height: 34px; margin-right: 6px; }
.menubar > button { padding: 0 14px 4px; font-size: 23px; line-height: 36px; }
.brand { margin-left: auto; margin-right: 20px; height: 40px; font: bold 36px/44px "DejaVu Sans", sans-serif; color: #231f20; }
.brand sup { position: relative; top: -8px; margin-left: 4px; font-size: 20px; font-weight: 400; line-height: 0; }
.macron { position: relative; }
.macron::before { content: ""; position: absolute; left: 4px; top: 7px; width: 16px; height: 4px; background: #e03c41; }
.mdibtns { display: flex; gap: 2px; padding-right: 2px; }
.mdibtns button { display: flex; justify-content: center; align-items: center; width: 36px; height: 36px; border: 2px solid #e4e4e4; background: #fff; }
.mdibtns svg { width: 16px; height: 16px; }

/* tool bars */
.toolbars { padding-bottom: 4px; border-bottom: 2px solid #dcdcdc; }
.bar { display: flex; align-items: center; height: 68px; padding-left: 14px; }
.edge { height: 2px; background: #dcdcdc; }
.edge-top { margin-left: 1550px; width: 818px; }
.edge-mid { margin-left: 1450px; width: 100px; }
.tool { display: flex; justify-content: center; align-items: center; width: 58px; height: 58px; }
.tool svg { width: 46px; height: 46px; filter: drop-shadow(1px 2px 1px #bbb); }
.tool.group { margin-left: 28px; }
.tool.slim { width: 22px; }
.tool.slim svg { width: 16px; height: 12px; filter: none; }
.combo { position: relative; width: 300px; height: 42px; }
.combo select { width: 100%; height: 100%; padding-left: 6px; appearance: none; border: 2px solid #7a7a7a; border-radius: 0; background: #fff; }
.combo svg { position: absolute; right: 9px; top: 17px; width: 16px; height: 10px; pointer-events: none; }
.combo.strong { font-size: 23px; font-weight: 700; }
.combo.find { margin: 0 2px 0 28px; }

/* main area */
.main { display: flex; flex: 1; min-height: 0; background: #efefef; }
.left { display: flex; flex-direction: column; flex: 1; min-width: 0; }
.work { display: flex; flex-direction: column; flex: 1; min-height: 0; padding: 0 8px 8px 12px; border-right: 2px solid #a0a0a0; border-bottom: 2px solid #a0a0a0; }
.tabs { display: flex; align-items: flex-end; height: 66px; padding: 0 0 7px 3px; }
.tab { display: flex; align-items: center; width: 176px; height: 46px; margin-right: 4px; border: 2px solid #000; border-radius: 8px 8px 0 0; background: #dcdcdc; color: #6e6e6e; white-space: nowrap; overflow: hidden; padding-left: 52px; font-size: 21px; }
.tab.file { padding-left: 2px; margin-right: 0; }
.tab.file svg { width: 32px; height: 28px; margin-right: 4px; }
.tab.active { width: 186px; height: 50px; margin-left: -1px; padding-left: 6px; border-bottom: 0; border-radius: 10px 10px 0 0; background: #efefef; color: #000; font-weight: 700; box-shadow: inset 0 5px #ffbfbf; }
.tab.active svg { width: 24px; height: 32px; margin-right: 34px; }
.doc { display: grid; grid-template-columns: 20px minmax(0, 1fr) 34px; grid-template-rows: 20px minmax(0, 1fr) 34px; flex: 1; min-height: 0; border-top: 2px solid #a0a0a0; border-left: 2px solid #a0a0a0; border-right: 2px solid #fff; border-bottom: 2px solid #fff; box-shadow: inset 2px 2px #696969; padding: 2px 0 0 2px; }
.hruler { grid-column: 1 / 3; width: 100%; height: 20px; border-top: 2px solid #000; border-bottom: 2px solid #000; background: #fff; font-size: 14px; }
.splitbox { height: 14px; border: 2px solid #696969; border-top-color: #fff; border-left-color: #fff; box-shadow: inset -2px -2px #a0a0a0; }
.vruler { width: 20px; height: 100%; border-left: 2px solid #000; border-right: 2px solid #000; background: #fff; font-size: 14px; overflow: hidden; }
.canvas { width: 100%; height: 100%; background: #fff; }
.wires path, .pins path, .parts path, .parts circle { fill: none; stroke-width: 2; }
.wires path { stroke: #800040; shape-rendering: crispEdges; }
.pins path { stroke: #f00; shape-rendering: crispEdges; }
.parts path, .parts circle { stroke: #00f; shape-rendering: crispEdges; }
.labels { font-family: "Liberation Sans", Arial, sans-serif; font-size: 71px; }
.flag { font-size: 60px; }
.net0 { font-size: 88px; }

.vscroll, .hscroll { display: flex; align-items: center; background: #efefef; }
.vscroll { grid-column: 3; grid-row: 2; flex-direction: column; padding: 8px 4px 14px 0; }
.vscroll svg { width: 16px; height: 10px; }
.vscroll .before { flex: 458; }
.vscroll .thumb { flex: 427; width: 30px; background: #cdcdcd; }
.vscroll .after { flex: 663; }
.hscroll { grid-column: 1 / 3; padding: 0 14px 4px 0; }
.hscroll svg { width: 10px; height: 16px; }
.grip { width: 14px; height: 34px; margin-right: 10px; border: 2px solid #696969; border-top-color: #fff; border-left-color: #fff; box-shadow: inset -2px 0 #a0a0a0; }
.hscroll .before { flex: 1002; }
.hscroll .thumb { flex: 1656; height: 28px; background: #cdcdcd; }
.hscroll .after { flex: 922; }
.sizer { width: 16px; height: 16px; margin: 12px 0 0 10px; }

.hsplit { height: 12px; border-top: 2px solid #fff; border-bottom: 2px solid #606060; background: #d3d9ec; box-shadow: inset 0 -2px #a0a0a0; }
.command { display: flex; align-items: flex-start; height: 52px; padding: 6px 6px 0 8px; background: #fff; border-bottom: 2px solid #a0a0a0; box-shadow: inset 0 -4px #dcdcdc; }
.side { display: flex; flex-direction: column; gap: 4px; padding-top: 4px; width: 28px; }
.side button { display: flex; justify-content: center; align-items: center; width: 24px; height: 20px; background: #e4e4e4; border-right: 2px solid #888; border-bottom: 2px solid #888; }
.side svg { width: 12px; height: 12px; }
.side i { width: 24px; height: 15px; border-right: 3px solid #888; background: #dcdcdc; }
.command input { flex: 1; height: 36px; border: 2px solid #dcdcdc; border-top: 4px solid #808080; border-left: 4px solid #808080; border-right: 0; background: #fff; }
.cap { width: 36px; height: 36px; background: #efefef; border-right: 2px solid #dcdcdc; border-bottom: 2px solid #dcdcdc; }
.vsplit { width: 12px; background: #d3d9ec; border-left: 2px solid #fff; border-right: 2px solid #606060; box-shadow: inset -2px 0 #a0a0a0; }

/* place part palette, collapsed to a sliver */
.palette { display: flex; flex-direction: column; width: 50px; background: #fff; }
.phead { display: flex; align-items: center; height: 26px; gap: 14px; }
.phead > svg { width: 10px; height: 6px; }
.phead button svg { width: 12px; height: 10px; }
.pbox { display: flex; flex-direction: column; height: 793px; border: 2px solid #000; background: #efefef; overflow: hidden; }
.plink { height: 50px; padding-left: 28px; line-height: 50px; color: #22f; text-decoration: none; }
.pstrip { height: 10px; background: #fff; }
.ptools { height: 40px; }
.plist { display: flex; flex-direction: column; align-items: center; height: 543px; padding: 14px 3px 14px 4px; border-left: 12px solid #fff; }
.plist svg { width: 14px; height: 8px; }
.plist i { width: 26px; height: 162px; margin-top: 12px; background: #b9b9b9; border: 2px solid #a4a4a4; }
.plist .down { margin-top: auto; }
.pform { display: flex; flex-direction: column; gap: 10px; padding: 26px 0 0 10px; }
.pq { width: 28px; height: 46px; border: 2px solid #000; background: #fff; line-height: 42px; padding-left: 5px; }
.pbar { width: 12px; height: 54px; border: 2px solid #b0b0b0; border-radius: 3px; background: #fff; }
.phits { display: flex; flex-direction: column; flex: 1; min-height: 0; border: solid #000; border-width: 2px 4px 0 4px; }
.prow { display: flex; gap: 2px; height: 38px; background: #000; padding-bottom: 2px; }
.prow i { width: 12px; background: #cacaca; }
.prow i + i { width: 28px; }
.ptable { position: relative; flex: 1; min-height: 0; overflow: hidden; background: #fff; }
.pcol { margin-left: 12px; height: 100%; padding: 7px 0 0 9px; border-left: 2px solid #a4a4a4; background: #f5f5f5; color: #a9a9b4; overflow: hidden; }
.pcol p { margin: 0 0 8px; line-height: 26px; }
.pthumb { position: absolute; left: 14px; top: 36px; width: 25px; height: 347px; background: rgba(120, 120, 120, .3); }
.pup, .pdown { position: absolute; left: 18px; width: 14px; height: 8px; }
.pup { top: 14px; }
.pdown { bottom: 14px; }
.pfoot { height: 38px; padding-left: 29px; border-top: 2px solid #808080; background: #cacaca; line-height: 36px; }

/* drawing tool rail */
.rail { display: flex; flex-direction: column; gap: 2px; width: 76px; padding: 14px 6px 0 10px; border-left: 2px solid #a0a0a0; background: #fff; }
.rail button { display: flex; justify-content: center; align-items: center; width: 58px; height: 60px; border: 2px solid transparent; }
.rail .on { border-color: #99d1ff; background: #cde8ff; }
.rail svg { width: 44px; height: 44px; filter: drop-shadow(1px 2px 1px #bbb); }
.rail .abc { position: relative; }
.abc span { position: absolute; left: 12px; top: 6px; font: 18px/20px "DejaVu Sans", sans-serif; color: #666; }
.abc.bold span { font-weight: 700; left: 8px; top: 14px; }

/* status bar */
.status { display: flex; align-items: center; height: 50px; border-top: 2px solid #fff; border-bottom: 2px solid #444; box-shadow: inset 0 2px #dcdcdc, inset 0 -6px #fff, inset 0 -7px #dcdcdc; line-height: 36px; }
.msg { flex: 2549; padding-left: 5px; }
.sel { flex: 854; padding-left: 6px; border-left: 2px solid #dcdcdc; }
.pos { display: flex; gap: 32px; flex: 430; padding-left: 9px; border-left: 2px solid #dcdcdc; }
.xy { display: flex; gap: 16px; }
```
